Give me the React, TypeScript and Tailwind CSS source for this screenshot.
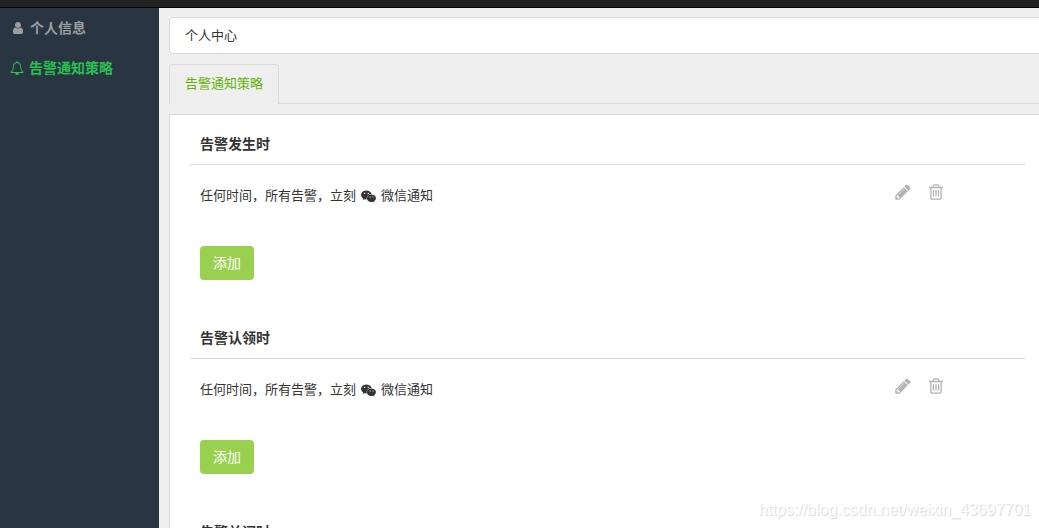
interface IconProps {
  className?: string
}

function UserIcon({ className }: IconProps) {
  return (
    <svg viewBox="0 0 1792 1792" fill="currentColor" aria-hidden="true" className={className}>
      <path d="M1536 1399q0 109-62.5 187t-150.5 78h-854q-88 0-150.5-78t-62.5-187q0-85 8.5-160.5t31.5-152 58.5-131 94-89 134.5-34.5q131 128 313 128t313-128q76 0 134.5 34.5t94 89 58.5 131 31.5 152 8.5 160.5zm-256-887q0 159-112.5 271.5t-271.5 112.5-271.5-112.5-112.5-271.5 112.5-271.5 271.5-112.5 271.5 112.5 112.5 271.5z" />
    </svg>
  )
}

function BellIcon({ className }: IconProps) {
  return (
    <svg viewBox="0 0 1792 1792" fill="currentColor" aria-hidden="true" className={className}>
      <path d="M912 1696q0-16-16-16-59 0-101.5-42.5t-42.5-101.5q0-16-16-16t-16 16q0 73 51.5 124.5t124.5 51.5q16 0 16-16zm-666-288h1300q-266-300-266-832 0-51-24-105t-69-103-121.5-80.5-169.5-31.5-169.5 31.5-121.5 80.5-69 103-24 105q0 532-266 832zm1482 0q0 52-38 90t-90 38h-448q0 106-75 181t-181 75-181-75-75-181h-448q-52 0-90-38t-38-90q50-42 91-88t85-119.5 74.5-158.5 50-206 19.5-260q0-152 117-282.5t307-158.5q-8-19-8-39 0-40 28-68t68-28 68 28 28 68q0 20-8 39 190 28 307 158.5t117 282.5q0 139 19.5 260t50 206 74.5 158.5 85 119.5 91 88z" />
    </svg>
  )
}

function WechatIcon({ className }: IconProps) {
  return (
    <svg viewBox="0 0 2048 1792" fill="currentColor" aria-hidden="true" className={className}>
      <path d="M580 461q0-41-25-66t-66-25q-43 0-76 25.5t-33 65.5q0 39 33 64.5t76 25.5q41 0 66-24.5t25-65.5zm743 507q0-28-25.5-50t-65.5-22q-27 0-49.5 22.5t-22.5 49.5q0 28 22.5 50.5t49.5 22.5q40 0 65.5-22t25.5-51zm-236-507q0-41-24.5-66t-65.5-25q-43 0-76 25.5t-33 65.5q0 39 33 64.5t76 25.5q41 0 65.5-24.5t24.5-65.5zm635 507q0-28-26-50t-65-22q-27 0-49.5 22.5t-22.5 49.5q0 28 22.5 50.5t49.5 22.5q39 0 65-22t26-51zm-266-397q-31-4-70-4-169 0-311 77t-223.5 208.5-81.5 287.5q0 78 23 152-35 3-68 3-26 0-50-1.5t-55-6.5-44.5-7-54.5-10.5-50-10.5l-253 127 72-218q-290-203-290-490 0-169 97.5-311t264-223.5 363.5-81.5q176 0 332.5 66t262 182.5 136.5 260.5zm592 561q0 117-68.5 223.5t-185.5 193.5l55 181-199-109q-150 37-218 37-169 0-311-70.5t-223.5-191.5-81.5-264 81.5-264 223.5-191.5 311-70.5q161 0 303 70.5t227.5 192 85.5 263.5z" />
    </svg>
  )
}

function PencilIcon({ className }: IconProps) {
  return (
    <svg viewBox="0 0 1792 1792" fill="currentColor" aria-hidden="true" className={className}>
      <path d="M491 1536l91-91-235-235-91 91v107h128v128h107zm523-928q0-22-22-22-10 0-17 7l-542 542q-7 7-7 17 0 22 22 22 10 0 17-7l542-542q7-7 7-17zm-54-192l416 416-832 832h-416v-416zm683 96q0 53-37 90l-166 166-416-416 166-165q36-38 90-38 53 0 91 38l235 234q37 39 37 91z" />
    </svg>
  )
}

function TrashIcon({ className }: IconProps) {
  return (
    <svg viewBox="0 0 1792 1792" fill="currentColor" aria-hidden="true" className={className}>
      <path d="M704 736v576q0 14-9 23t-23 9h-64q-14 0-23-9t-9-23v-576q0-14 9-23t23-9h64q14 0 23 9t9 23zm256 0v576q0 14-9 23t-23 9h-64q-14 0-23-9t-9-23v-576q0-14 9-23t23-9h64q14 0 23 9t9 23zm256 0v576q0 14-9 23t-23 9h-64q-14 0-23-9t-9-23v-576q0-14 9-23t23-9h64q14 0 23 9t9 23zm128 724v-948h-896v948q0 22 7 40.5t14.5 27 10.5 8.5h832q3 0 10.5-8.5t14.5-27 7-40.5zm-672-1076h448l-48-117q-7-9-17-11h-317q-10 2-17 11zm928 32v64q0 14-9 23t-23 9h-96v948q0 83-47 143.5t-113 60.5h-832q-66 0-113-58.5t-47-141.5v-952h-96q-14 0-23-9t-9-23v-64q0-14 9-23t23-9h309l70-167q15-37 54-63t79-26h320q40 0 79 26t54 63l70 167h309q14 0 23 9t9 23z" />
    </svg>
  )
}

function SectionTitle({ title }: { title: string }) {
  return (
    <h2 className="border-b border-[#dadada] px-2.5 py-2.5 text-sm leading-5 font-bold">
      {title}
    </h2>
  )
}

function StrategySection({ title }: { title: string }) {
  return (
    <section className="pb-[38px]">
      <SectionTitle title={title} />
      <div className="flex items-start justify-between pt-[18px] pr-[79px] pl-2.5">
        <p className="flex items-center pt-[3px] leading-5">
          任何时间，所有告警，立刻
          <WechatIcon className="mx-[5px] h-[13px] w-[15px]" />
          微信通知
        </p>
        <div className="flex gap-[15px] pr-px text-[#b3b3b3]">
          <button type="button" aria-label="编辑" className="hover:text-[#666]">
            <PencilIcon className="size-[18px]" />
          </button>
          <button type="button" aria-label="删除" className="hover:text-[#666]">
            <TrashIcon className="size-[18px]" />
          </button>
        </div>
      </div>
      <button
        type="button"
        className="mt-10 ml-2.5 rounded bg-[#99d04f] px-[13px] py-[7px] text-sm leading-5 text-white hover:bg-[#8bc43f]"
      >
        添加
      </button>
    </section>
  )
}

export default function App() {
  return (
    <div className="relative flex h-screen flex-col overflow-hidden bg-[#efefef] font-['Liberation_Sans','Noto_Sans_CJK_SC',sans-serif] text-[13px] text-[#333]">
      <header className="h-2 shrink-0 border-b border-[#080808] bg-[#222]" />
      <div className="flex min-h-0 flex-1">
        <nav className="w-[159px] shrink-0 bg-[#2a3542] text-sm font-bold">
          <a href="#profile" className="flex h-10 items-center gap-[5px] pl-[11px] text-[#9c9fa2]">
            <UserIcon className="size-3.5" />
            个人信息
          </a>
          <a href="#strategy" className="flex h-10 items-center gap-[5px] pl-2.5 text-[#26c251]">
            <BellIcon className="size-3.5" />
            告警通知策略
          </a>
        </nav>

        <main className="min-w-0 flex-1 overflow-hidden pt-[9px] pl-2.5">
          <h1 className="rounded-l border border-r-0 border-[#dadada] bg-white px-[15px] py-2 leading-[19px]">
            个人中心
          </h1>

          <div role="tablist" className="mt-2.5 flex border-b border-[#dadada]">
            <button
              type="button"
              role="tab"
              aria-selected="true"
              className="-mb-px rounded-t border border-b-0 border-[#dadada] bg-[#efefef] px-[15px] pt-2 pb-2.5 leading-[21px] text-[#5fb404]"
            >
              告警通知策略
            </button>
          </div>

          <div className="mt-2.5 border-t border-l border-[#dadada] bg-white pt-[9px] pr-3.5 pl-5">
            <StrategySection title="告警发生时" />
            <StrategySection title="告警认领时" />
            <SectionTitle title="告警关闭时" />
          </div>
        </main>
      </div>
      <span className="pointer-events-none absolute right-2 bottom-2 text-base leading-5 text-white [text-shadow:1px_1px_1px_#d4d4d4]">
        https://blog.csdn.net/weixin_43697701
      </span>
    </div>
  )
}
